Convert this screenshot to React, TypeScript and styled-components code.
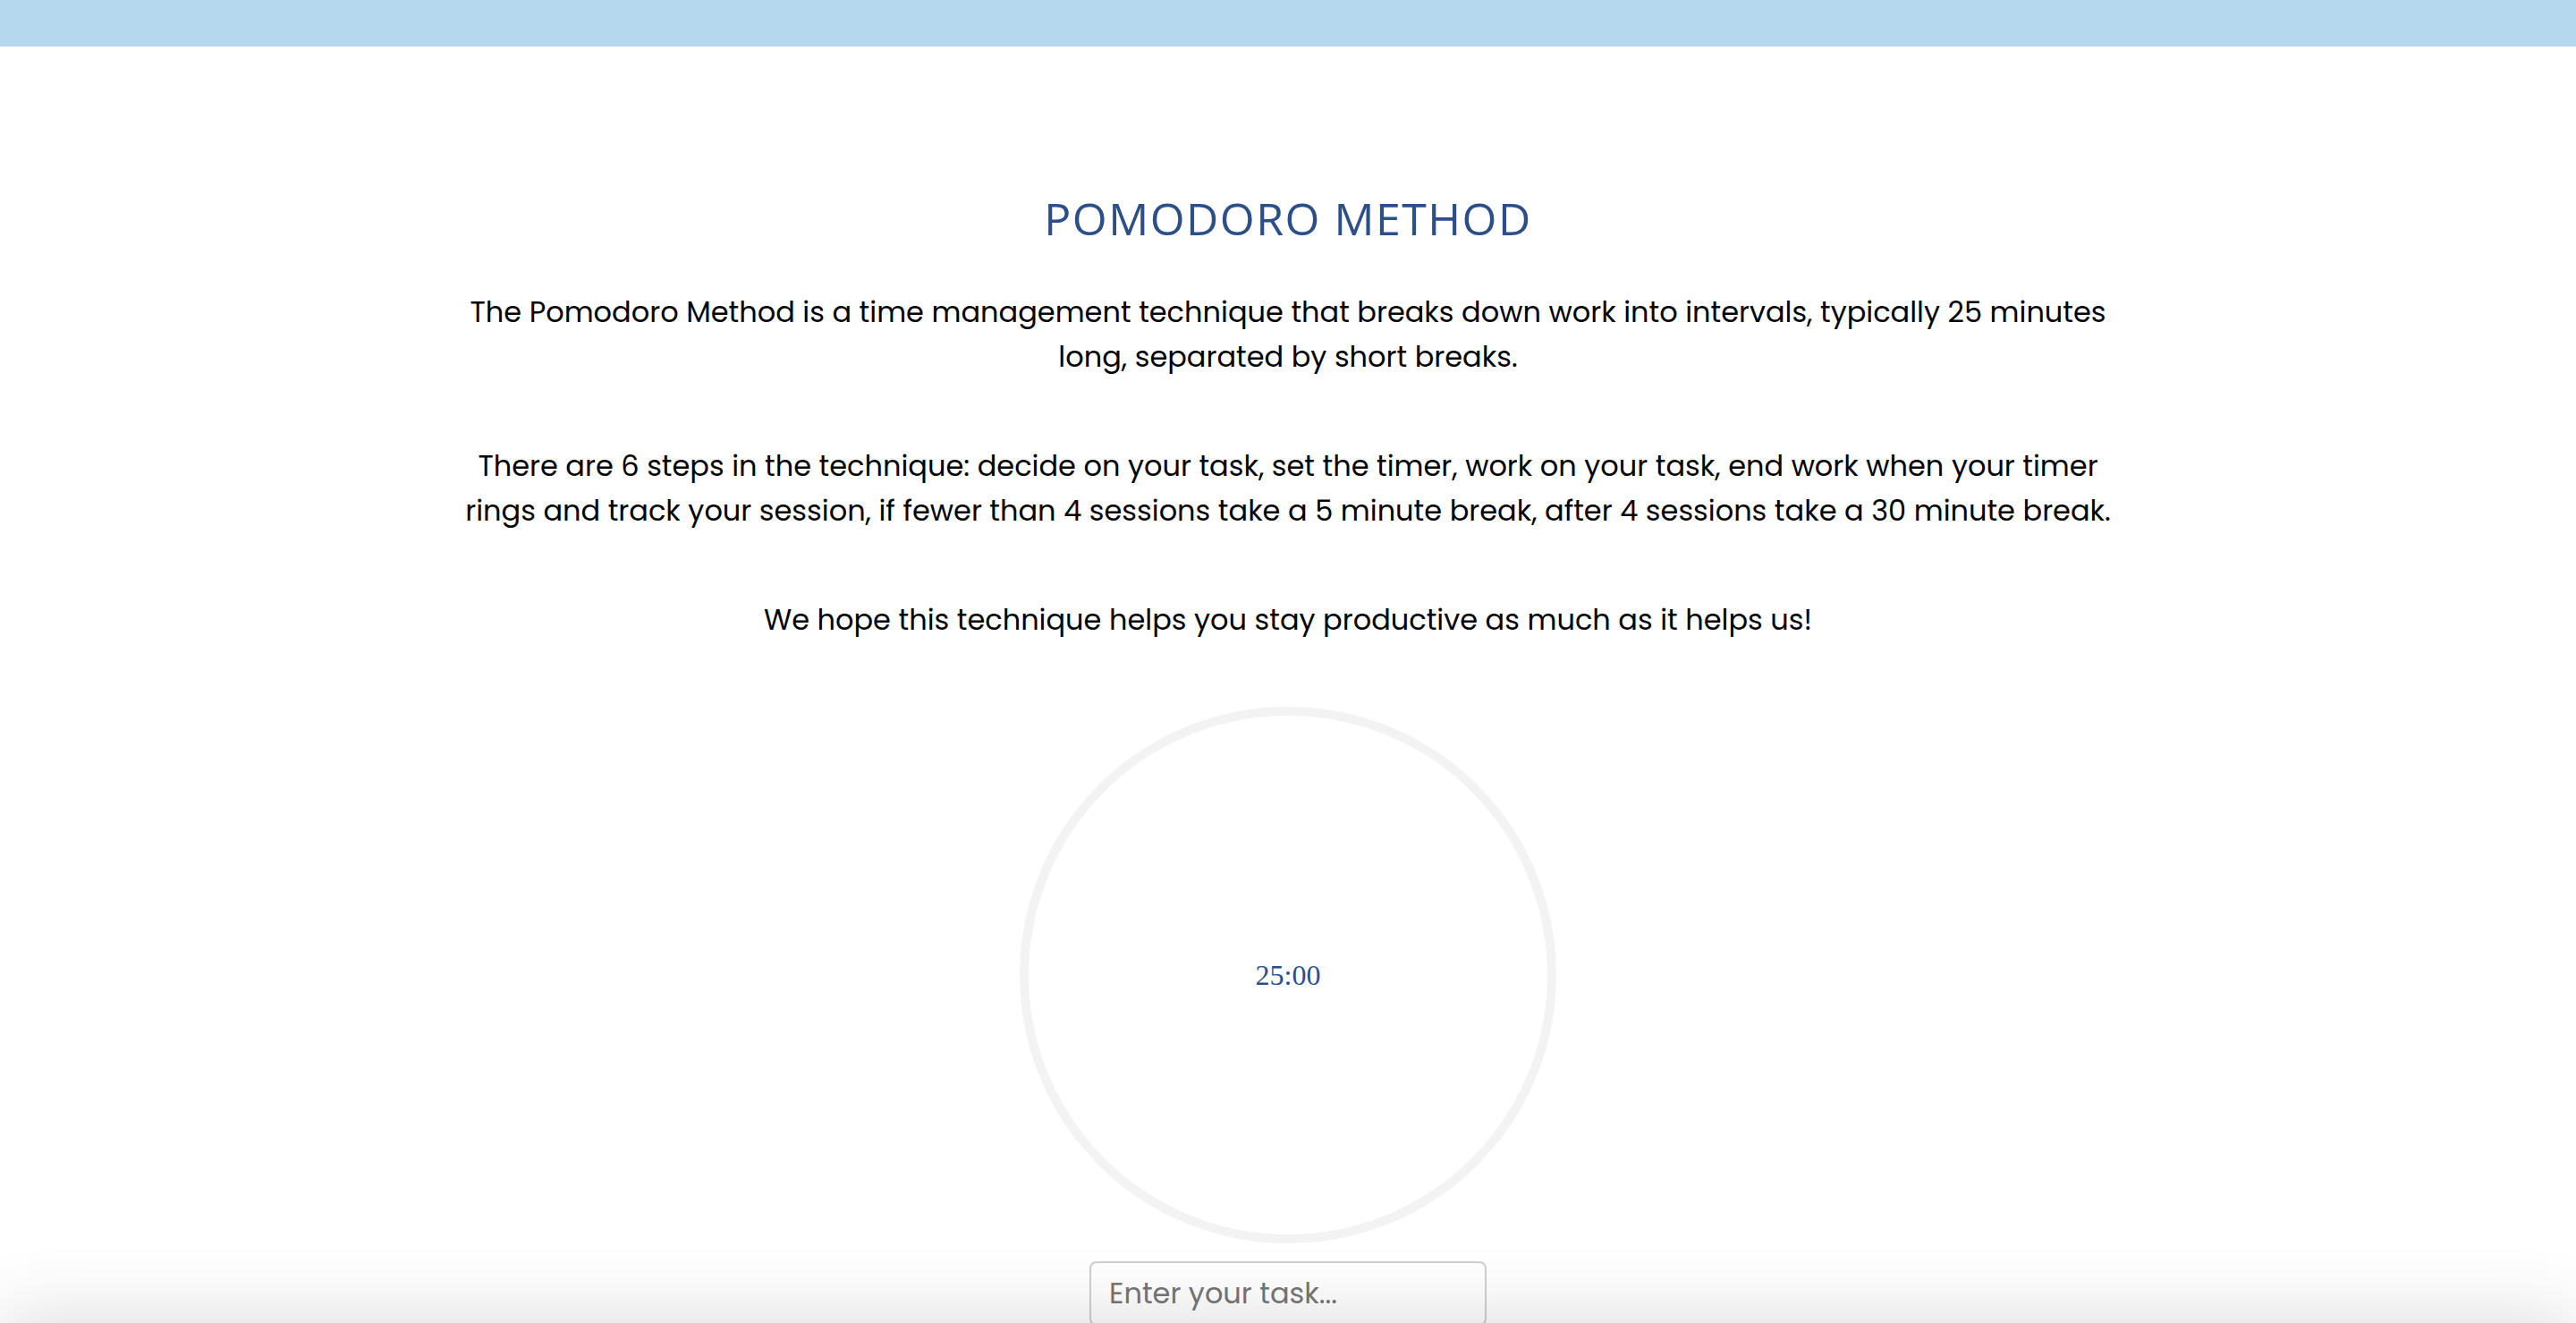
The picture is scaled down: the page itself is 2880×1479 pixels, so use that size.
import React, { useState } from "react"
import styled, { createGlobalStyle } from "styled-components"

const GlobalStyle = createGlobalStyle`
    * { box-sizing: border-box; }
    html, body {
        margin: 0;
        padding: 0;
        background: #fff;
    }
    body {
        font-family: Poppins, "Open Sans", "Noto Sans", sans-serif;
        color: #000;
    }
`

const intro = [
    "The Pomodoro Method is a time management technique that breaks down work into intervals, typically 25 minutes long, separated by short breaks.",
    "There are 6 steps in the technique: decide on your task, set the timer, work on your task, end work when your timer rings and track your session, if fewer than 4 sessions take a 5 minute break, after 4 sessions take a 30 minute break.",
    "We hope this technique helps you stay productive as much as it helps us!",
]

const formatTime = (seconds: number) => {
    const m = Math.floor(seconds / 60).toString().padStart(2, "0")
    const s = (seconds % 60).toString().padStart(2, "0")
    return `${m}:${s}`
}

const App: React.FC = () => {
    const [seconds] = useState(25 * 60)
    const [task, setTask] = useState("")

    return (
        <>
            <GlobalStyle />
            <TopBar />
            <Main>
                <Title>POMODORO METHOD</Title>
                <Intro>
                    {intro.map((text, i) => (
                        <Paragraph key={i}>{text}</Paragraph>
                    ))}
                </Intro>
                <TimerRing>
                    <TimeText>{formatTime(seconds)}</TimeText>
                </TimerRing>
                <TaskInput
                    type="text"
                    placeholder="Enter your task..."
                    value={task}
                    onChange={e => setTask(e.target.value)}
                />
                <TaskPanel />
            </Main>
            <BottomShade />
        </>
    )
}

export default App

const TopBar = styled.header`
    height: 52px;
    background: #b5d8ef;
`
const Main = styled.main`
    display: flex;
    flex-direction: column;
    align-items: center;
    padding-top: 162px;
`
const Title = styled.h1`
    margin: 0;
    font-family: "Open Sans", "Noto Sans", sans-serif;
    font-weight: 400;
    font-size: 50px;
    line-height: 60px;
    letter-spacing: 1.5px;
    color: #2b4f86;
`
const Intro = styled.section`
    display: flex;
    flex-direction: column;
    gap: 72px;
    max-width: 1860px;
    margin-top: 50px;
`
const Paragraph = styled.p`
    margin: 0;
    text-align: center;
    font-size: 32px;
    line-height: 50px;
`
const TimerRing = styled.div`
    width: 600px;
    height: 600px;
    margin-top: 72px;
    border: 10px solid #f3f3f3;
    border-radius: 50%;
    display: grid;
    place-items: center;
`
const TimeText = styled.span`
    font-family: "Liberation Serif", "Times New Roman", serif;
    font-size: 32px;
    color: #2a4f8a;
`
const TaskInput = styled.input`
    margin-top: 20px;
    width: 444px;
    padding: 10px 20px;
    font-family: Poppins, "Open Sans", sans-serif;
    font-size: 32px;
    line-height: 48px;
    border: 2px solid #cfcfcf;
    border-radius: 8px;
    background: transparent;
    outline: none;
    &::placeholder {
        color: #767676;
    }
`
const TaskPanel = styled.section`
    height: 400px;
`
const BottomShade = styled.div`
    position: fixed;
    left: 0;
    right: 0;
    bottom: -120px;
    height: 120px;
    pointer-events: none;
    box-shadow: 0 0 90px rgba(0, 0, 0, 0.16);
`
